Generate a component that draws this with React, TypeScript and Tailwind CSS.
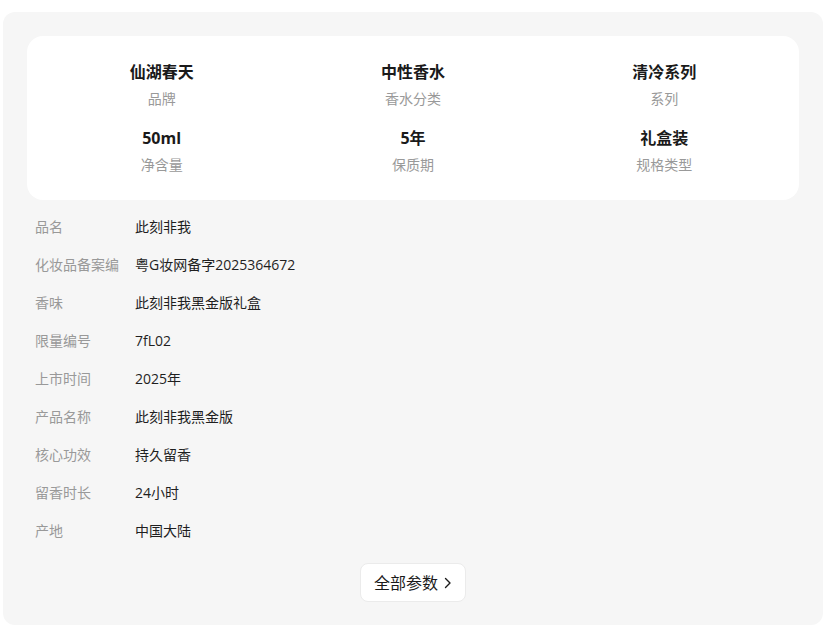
import React from "react";

const top = [
  { v: "仙湖春天", l: "品牌" },
  { v: "中性香水", l: "香水分类" },
  { v: "清冷系列", l: "系列" },
  { v: "50ml", l: "净含量" },
  { v: "5年", l: "保质期" },
  { v: "礼盒装", l: "规格类型" },
];

const rows = [
  ["品名", "此刻非我"],
  ["化妆品备案编", "粤G妆网备字2025364672"],
  ["香味", "此刻非我黑金版礼盒"],
  ["限量编号", "7fL02"],
  ["上市时间", "2025年"],
  ["产品名称", "此刻非我黑金版"],
  ["核心功效", "持久留香"],
  ["留香时长", "24小时"],
  ["产地", "中国大陆"],
];

export default function App() {
  return (
    <div
      className="min-h-[634px] bg-white pt-[12px] pl-[3px]"
      style={{ fontFamily: '"Open Sans", "Noto Sans CJK SC", sans-serif' }}
    >
      <div className="w-[820px] rounded-[12px] bg-[#f6f6f6] px-[24px] pt-[24px] pb-[23px]">
        <div className="rounded-[16px] bg-white px-[9px] pt-[24px] pb-[26px]">
          <div className="grid grid-cols-3 gap-y-[18px]">
            {top.map((t) => (
              <div key={t.l} className="flex flex-col items-center">
                <div className="text-[16px] leading-[24px] font-bold text-[#1a1a1a]">{t.v}</div>
                <div className="mt-[6px] text-[14px] leading-[18px] text-[#999999]">{t.l}</div>
              </div>
            ))}
          </div>
        </div>
        <div className="mt-[7px] flex flex-col">
          {rows.map(([l, v]) => (
            <div key={l} className="flex h-[38px] items-center pl-[8px] text-[14px]">
              <div className="w-[100px] shrink-0 whitespace-nowrap overflow-hidden text-[#999999]">{l}</div>
              <div className="text-[#1f1f1f]">{v}</div>
            </div>
          ))}
        </div>
        <div className="mt-[14px] flex justify-center">
          <div className="flex h-[39px] w-[106px] items-center justify-center gap-[6px] rounded-[8px] border border-[#ebebeb] bg-white text-[16px] text-[#1a1a1a]">
            <span>全部参数</span>
            <svg width="8" height="12" viewBox="0 0 8 12" fill="none">
              <path d="M1.5 1.5L6 6l-4.5 4.5" stroke="#1a1a1a" strokeWidth="1.4" strokeLinecap="round" strokeLinejoin="round" />
            </svg>
          </div>
        </div>
      </div>
    </div>
  );
}
